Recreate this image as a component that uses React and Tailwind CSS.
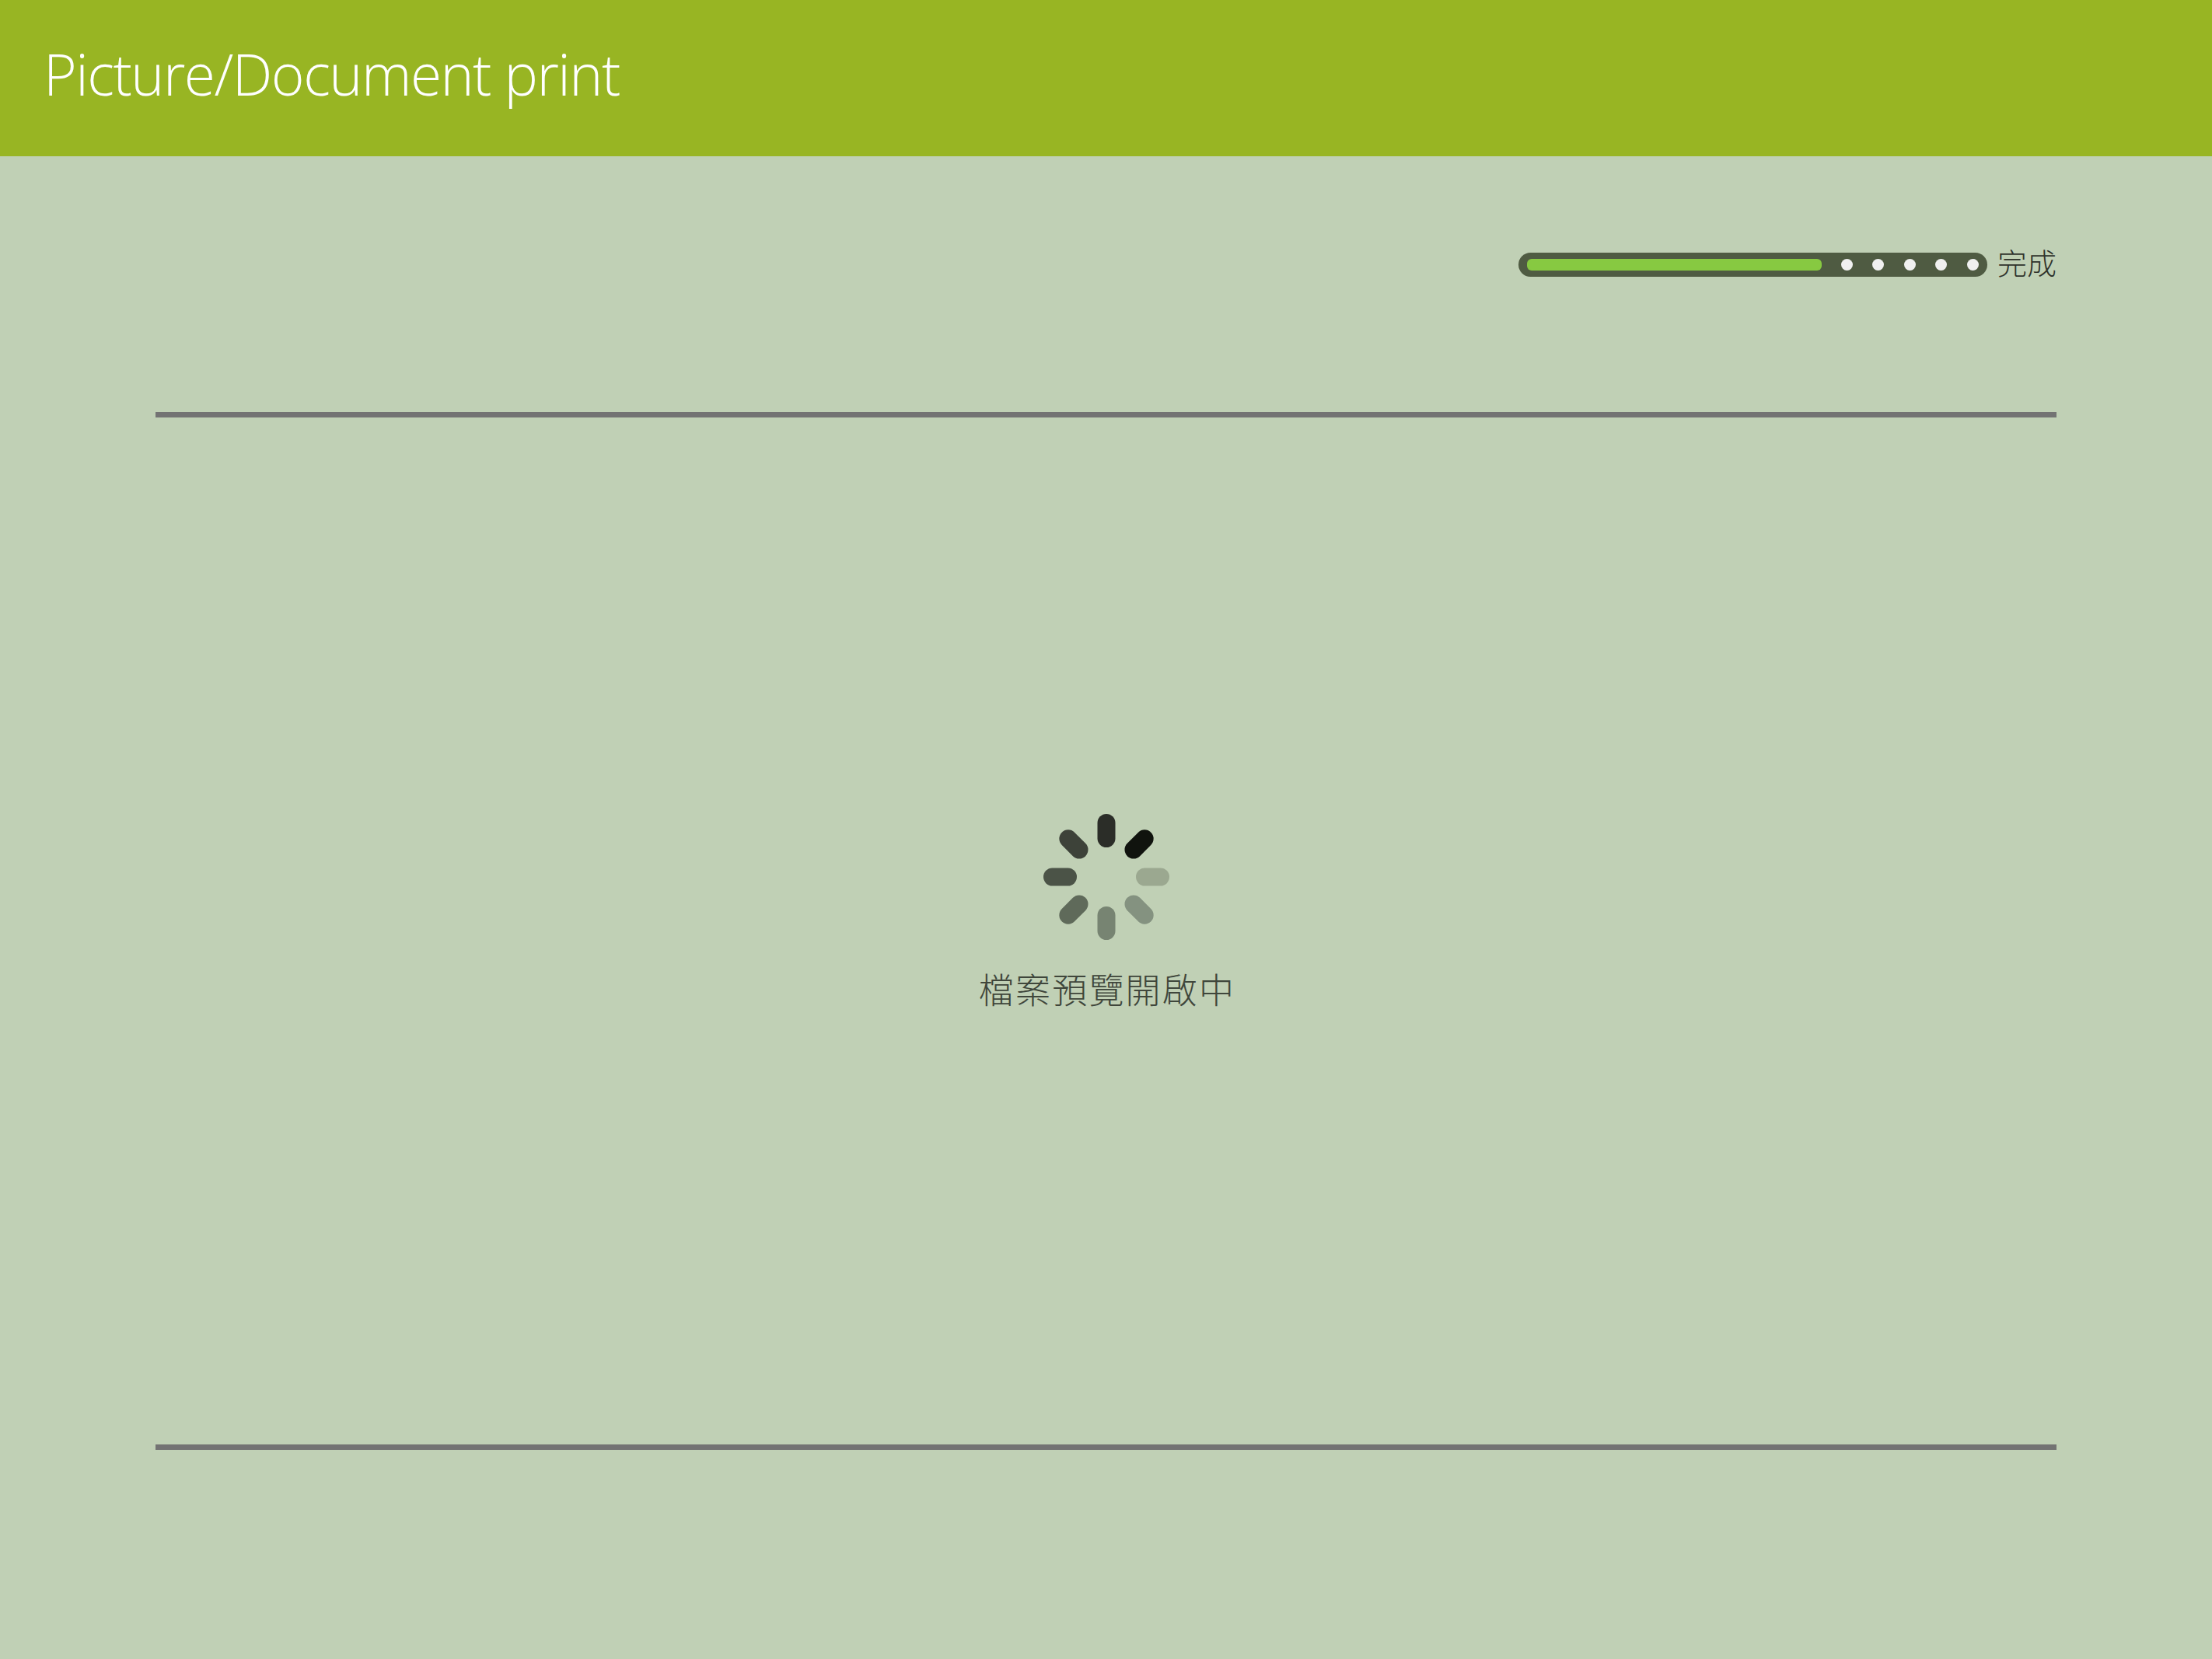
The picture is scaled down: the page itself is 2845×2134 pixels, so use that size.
const bars = [
  { angle: 0, color: "#2b2d28" },
  { angle: 45, color: "#10130e" },
  { angle: 90, color: "#9ba890" },
  { angle: 135, color: "#849280" },
  { angle: 180, color: "#778472" },
  { angle: 225, color: "#5f6a5a" },
  { angle: 270, color: "#4b5347" },
  { angle: 315, color: "#3d4239" },
];

function Spinner() {
  return (
    <svg width="164" height="164" viewBox="-82 -82 164 164" className="block">
      {bars.map((b) => (
        <rect
          key={b.angle}
          x="-11.5"
          y="-81"
          width="23"
          height="43"
          rx="11.5"
          fill={b.color}
          transform={`rotate(${b.angle})`}
        />
      ))}
    </svg>
  );
}

export default function App() {
  return (
    <div className="w-[2845px] h-[2134px] bg-[#c0d0b5] flex flex-col overflow-hidden">
      <header className="h-[201px] shrink-0 bg-[#98b523] flex items-center pl-[56px]">
        <h1 className="text-[73px] leading-none text-white font-light tracking-[-1.5px] font-['Open_Sans',sans-serif] pb-[12px]">
          Picture/Document print
        </h1>
      </header>

      <div className="flex-1 flex flex-col px-[200px]">
        <div className="mt-[124px] h-[31px] flex items-center justify-end gap-[13px]">
          <div className="w-[603px] h-[31px] rounded-full bg-[#4f5b42] flex items-center pl-[11px] pr-[10px]">
            <div className="w-[379px] h-[15px] rounded-[6px] bg-[#87c941]" />
            <div className="ml-[25px] flex items-center gap-[25.5px]">
              {[0, 1, 2, 3, 4].map((i) => (
                <span key={i} className="w-[15px] h-[15px] rounded-full bg-[#f0f0f0]" />
              ))}
            </div>
          </div>
          <span className="text-[38px] leading-none text-[#2f332c] font-light font-['Noto_Sans_CJK_TC',sans-serif] pb-[8px]">
            完成
          </span>
        </div>

        <div className="mt-[174px] h-[7px] bg-[#737373]" />

        <div className="h-[1321px] flex flex-col items-center pt-[509px]">
          <Spinner />
          <p className="mt-[39px] pl-[3px] text-[45px] leading-none tracking-[2.2px] text-[#3f463b] font-light font-['Noto_Sans_CJK_TC',sans-serif]">
            檔案預覽開啟中
          </p>
        </div>

        <div className="h-[7px] bg-[#737373]" />
      </div>
    </div>
  );
}
